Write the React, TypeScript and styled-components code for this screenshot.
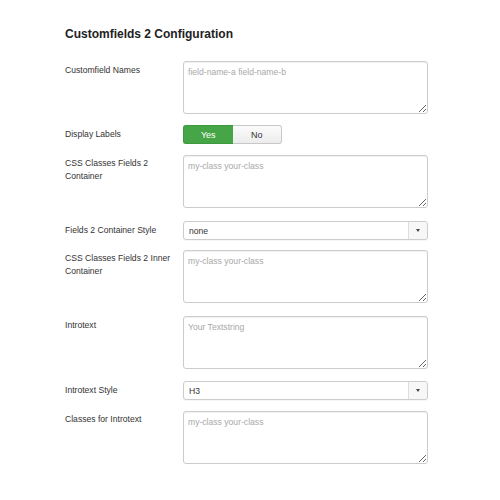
import React from "react";
import styled, { createGlobalStyle } from "styled-components";

const Global = createGlobalStyle`
  html, body { margin: 0; padding: 0; background: #fff; }
  body { font-family: "Liberation Sans", Arial, sans-serif; color: #333; }
`;

const Page = styled.div`
  width: 500px;
  height: 500px;
  box-sizing: border-box;
  padding: 25px 0 0 65px;
`;

const Title = styled.h2`
  margin: 0 0 18px;
  font-size: 12px;
  font-weight: bold;
  line-height: 18px;
  color: #222;
`;

const Row = styled.div<{ $gap?: number }>`
  display: grid;
  grid-template-columns: 118px 245px;
  margin-bottom: ${(p) => (p.$gap ?? 11)}px;
`;

const Label = styled.div<{ $top?: number }>`
  font-size: 8.6px;
  line-height: 13px;
  padding-top: ${(p) => (p.$top ?? 2)}px;
  color: #333;
`;

const Area = styled.textarea`
  display: block;
  box-sizing: border-box;
  width: 245px;
  height: 53px;
  margin: 0;
  padding: 4px 4px;
  border: 1px solid #ccc;
  border-radius: 3px;
  box-shadow: inset 0 1px 1px rgba(0, 0, 0, 0.06);
  font-family: "Liberation Sans", Arial, sans-serif;
  font-size: 8.6px;
  line-height: 12px;
  resize: vertical;
  outline: none;
  &::placeholder { color: #a8a8a8; }
`;

const Toggle = styled.div`
  display: flex;
  width: 99px;
  height: 19px;
`;

const ToggleBtn = styled.div<{ $on?: boolean; $first?: boolean }>`
  flex: 1;
  display: flex;
  align-items: center;
  justify-content: center;
  font-size: 9px;
  box-sizing: border-box;
  border: 1px solid ${(p) => (p.$on ? "#3c9a3c" : "#c8c8c8")};
  ${(p) => (p.$first ? "border-right: none;" : "border-left: none;")}
  border-radius: ${(p) => (p.$first ? "3px 0 0 3px" : "0 3px 3px 0")};
  background: ${(p) => (p.$on ? "#46a546" : "linear-gradient(#fbfbfb, #ececec)")};
  color: ${(p) => (p.$on ? "#fff" : "#333")};
`;

const Select = styled.div`
  display: flex;
  box-sizing: border-box;
  width: 245px;
  height: 19px;
  border: 1px solid #ccc;
  border-radius: 3px;
  background: #fff;
  font-size: 8.6px;
  box-shadow: 0 1px 1px rgba(0, 0, 0, 0.04);
`;

const SelectText = styled.div`
  flex: 1;
  display: flex;
  align-items: center;
  padding-left: 5px;
  color: #333;
`;

const Caret = styled.div`
  width: 18px;
  border-left: 1px solid #ddd;
  display: flex;
  align-items: center;
  justify-content: center;
  background: #f7f7f7;
  border-radius: 0 3px 3px 0;
  &::after {
    content: "";
    border-left: 2.5px solid transparent;
    border-right: 2.5px solid transparent;
    border-top: 3px solid #444;
  }
`;

export default function App() {
  return (
    <Page>
      <Global />
      <Title>Customfields 2 Configuration</Title>
      <Row>
        <Label $top={3}>Customfield Names</Label>
        <Area placeholder="field-name-a field-name-b" />
      </Row>
      <Row>
        <Label $top={3}>Display Labels</Label>
        <Toggle>
          <ToggleBtn $on $first>Yes</ToggleBtn>
          <ToggleBtn>No</ToggleBtn>
        </Toggle>
      </Row>
      <Row $gap={13}>
        <Label>CSS Classes Fields 2 Container</Label>
        <Area placeholder="my-class your-class" />
      </Row>
      <Row $gap={10}>
        <Label $top={3}>Fields 2 Container Style</Label>
        <Select>
          <SelectText>none</SelectText>
          <Caret />
        </Select>
      </Row>
      <Row $gap={13}>
        <Label>CSS Classes Fields 2 Inner Container</Label>
        <Area placeholder="my-class your-class" />
      </Row>
      <Row $gap={12}>
        <Label $top={3}>Introtext</Label>
        <Area placeholder="Your Textstring" />
      </Row>
      <Row $gap={11}>
        <Label $top={3}>Introtext Style</Label>
        <Select>
          <SelectText>H3</SelectText>
          <Caret />
        </Select>
      </Row>
      <Row>
        <Label>Classes for Introtext</Label>
        <Area placeholder="my-class your-class" />
      </Row>
    </Page>
  );
}
